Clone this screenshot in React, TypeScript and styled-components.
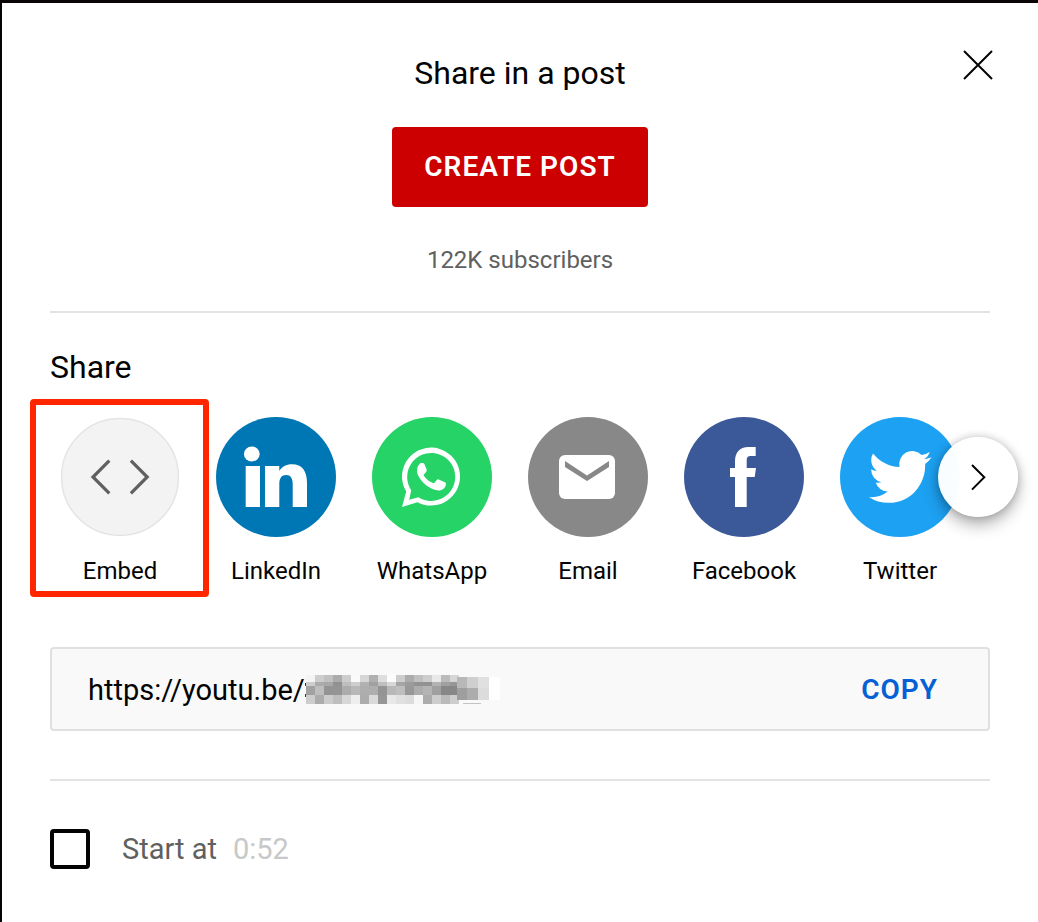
import React from "react";
import styled, { createGlobalStyle } from "styled-components";

const GlobalStyle = createGlobalStyle`
  *, *::before, *::after { box-sizing: border-box; }
  body {
    margin: 0;
    background: #ffffff;
    color: #030303;
    font-family: Roboto, "Liberation Sans", sans-serif;
  }
  button, input { font: inherit; }
`;

const Dialog = styled.main`
  position: relative;
  min-height: 100vh;
  padding: 48px;
  border-top: 3px solid #0a0504;
  border-left: 2px solid #050505;
  background: #ffffff;
`;

const CloseButton = styled.button`
  position: absolute;
  top: 38px;
  right: 36px;
  width: 48px;
  height: 48px;
  padding: 0;
  border: 0;
  background: none;
  cursor: pointer;

  svg { display: block; }
`;

const PostSection = styled.section`
  display: flex;
  flex-direction: column;
  align-items: center;
`;

const Heading = styled.h2`
  margin: 0;
  font-size: 32px;
  font-weight: 400;
  line-height: 44px;
`;

const CreateButton = styled.button`
  height: 80px;
  margin-top: 32px;
  padding: 0 32px 2px;
  border: 0;
  border-radius: 4px;
  background: #cc0000;
  color: #ffffff;
  font-size: 28px;
  font-weight: 600;
  letter-spacing: 1px;
  text-transform: uppercase;
  cursor: pointer;
`;

const Subscribers = styled.p`
  margin: 37px 0 0;
  color: #606060;
  font-size: 24px;
  line-height: 32px;
`;

const Divider = styled.hr<{ $top: number; $bottom: number }>`
  height: 2px;
  margin: ${(p) => p.$top}px 0 ${(p) => p.$bottom}px;
  border: 0;
  background: #e3e3e3;
`;

const Carousel = styled.div`
  position: relative;
  margin-top: 28px;
`;

const TargetList = styled.ul`
  display: flex;
  gap: 36px;
  margin: 0;
  padding: 0 10px;
  list-style: none;
`;

const TargetItem = styled.li<{ $highlighted?: boolean }>`
  position: relative;
  flex: none;

  &::after {
    content: ${(p) => (p.$highlighted ? '""' : "none")};
    position: absolute;
    inset: -18px -29px -10px -30px;
    border: 6px solid #ff2600;
    border-radius: 4px;
    pointer-events: none;
  }
`;

const TargetButton = styled.button`
  display: flex;
  flex-direction: column;
  align-items: center;
  gap: 18px;
  width: 120px;
  padding: 0;
  border: 0;
  background: none;
  color: #030303;
  font-size: 24px;
  line-height: 32px;
  cursor: pointer;

  svg { display: block; }
`;

const NextButton = styled.button`
  position: absolute;
  top: 20px;
  right: -28px;
  width: 80px;
  height: 80px;
  padding: 0;
  border: 0;
  border-radius: 50%;
  background: rgba(255, 255, 255, 0.98);
  box-shadow: 0 8px 16px rgba(0, 0, 0, 0.3), 0 0 8px rgba(0, 0, 0, 0.2);
  cursor: pointer;

  svg { display: block; }
`;

const LinkBar = styled.div`
  display: flex;
  align-items: center;
  height: 84px;
  margin-top: 60px;
  padding: 2px 36px 0;
  border: 2px solid #e0e0e0;
  border-radius: 4px;
  background: #f9f9f9;
`;

const LinkInput = styled.input`
  field-sizing: content;
  min-width: 0;
  padding: 0;
  border: 0;
  outline: 0;
  background: none;
  color: #030303;
  font-size: 29px;
  line-height: 40px;
`;

const Mosaic = styled.svg`
  flex: none;
  display: block;
`;

const CopyButton = styled.button`
  margin-left: auto;
  padding: 0 14px;
  border: 0;
  background: none;
  color: #065fd4;
  font-size: 28px;
  font-weight: 600;
  line-height: 40px;
  letter-spacing: 1px;
  cursor: pointer;
`;

const StartRow = styled.div`
  display: flex;
  align-items: center;
  font-size: 29px;
  line-height: 40px;
`;

const Checkbox = styled.input`
  appearance: none;
  width: 40px;
  height: 40px;
  margin: 0 32px 0 0;
  border: 4px solid #030303;
  border-radius: 4px;
  background: #ffffff;

  &:checked { background: #030303; }
`;

const StartLabel = styled.label`
  color: #606060;
`;

const StartTime = styled.span`
  margin-left: 16px;
  color: #c8c8c8;
`;

const Disc = ({ fill, children }: { fill: string; children: React.ReactNode }) => (
  <svg width="120" height="120" viewBox="0 0 120 120" aria-hidden="true">
    <circle cx="60" cy="60" r="60" fill={fill} />
    {children}
  </svg>
);

const targets = [
  {
    name: "Embed",
    icon: (
      <svg width="120" height="120" viewBox="0 0 120 120" aria-hidden="true">
        <circle cx="60" cy="60" r="58.5" fill="#f3f3f3" stroke="#e4e4e4" strokeWidth="1.4" />
        <path
          d="M49.3 43.6L33 60l16.3 16.4M70.9 43.6L87.2 60 70.9 76.4"
          fill="none"
          stroke="#606060"
          strokeWidth="3.2"
        />
      </svg>
    ),
  },
  {
    name: "LinkedIn",
    icon: (
      <Disc fill="#0077b5">
        <ellipse cx="35.8" cy="37" rx="7.9" ry="7.4" fill="#fff" />
        <path
          fill="#fff"
          d="M29.7 49H44v41H29.7zM49 49h14.3v5C66 49.5 70 47.2 76 47.2c10.5 0 15 7 15 18.8v24H76.7V67.5c0-6.300-2-9.500-6.500-9.500-4.700 0-6.900 3.200-6.900 9.500V90H49z"
        />
      </Disc>
    ),
  },
  {
    name: "WhatsApp",
    icon: (
      <Disc fill="#25d366">
        <path
          fill="#fff"
          fillRule="evenodd"
          d="M30 90l4.200-15.400A29 29 0 1 1 45.400 85.200zM37.200 82.800l9.300-2.500A24 24 0 1 0 39.200 73.200z"
        />
        <path
          fill="#fff"
          d="M48.500 46h2.200c1 0 1.500.5 1.900 1.500l2 5c.3.900.1 1.600-.5 2.400l-2 2.300c-.5.600-.5 1.100-.1 1.700 2.300 3.300 5.300 5.500 9 7 .7.300 1.200.1 1.700-.5l2-2.500c.6-.7 1.200-.8 2-.5l6.200 2.900c.8.400 1.100.8 1 1.700-.3 4-3.400 6.500-7.400 6.500-3.500 0-9.500-2.500-13.500-6.200-4.500-4.200-8-9.300-8-13.300 0-3.300 1.300-6.400 3.500-8z"
        />
      </Disc>
    ),
  },
  {
    name: "Email",
    icon: (
      <Disc fill="#888888">
        <rect x="31" y="38" width="56" height="44" rx="6" fill="#fff" />
        <path fill="#888888" d="M37 44l22 14.500L81 44v6L59 64 37 50z" />
      </Disc>
    ),
  },
  {
    name: "Facebook",
    icon: (
      <Disc fill="#3b5998">
        <path
          fill="#fff"
          d="M51 90V60h-5v-9h5v-6.500C51 35.500 55.500 30 64.500 30h7.200v9h-4.500c-3.500 0-4.500 1.300-4.500 4.500V51H72l-1.300 9h-8v30z"
        />
      </Disc>
    ),
  },
  {
    name: "Twitter",
    icon: (
      <Disc fill="#1da1f2">
        <path
          transform="translate(28.7 28) scale(2.62 2.66)"
          fill="#fff"
          d="M23.953 4.570a10 10 0 0 1-2.825.775 4.958 4.958 0 0 0 2.163-2.723c-.951.555-2.005.959-3.127 1.184a4.920 4.920 0 0 0-8.384 4.482C7.690 8.095 4.067 6.130 1.640 3.162a4.822 4.822 0 0 0-.666 2.475c0 1.710.870 3.213 2.188 4.096a4.904 4.904 0 0 1-2.228-.616v.060a4.923 4.923 0 0 0 3.946 4.827 4.996 4.996 0 0 1-2.212.085 4.936 4.936 0 0 0 4.604 3.417 9.867 9.867 0 0 1-6.102 2.105c-.390 0-.779-.023-1.170-.067a13.995 13.995 0 0 0 7.557 2.209c9.053 0 13.998-7.496 13.998-13.985 0-.210 0-.420-.015-.630A9.935 9.935 0 0 0 24 4.590z"
        />
      </Disc>
    ),
  },
];

/* Grey levels of the censored part of the link: 9px columns, four bands. */
const mosaicBands = [
  { y: 5, h: 7, levels: [244, 205, 193, 172, 205, 250, 214, 176, 222, 252, 205, 172, 192, 205, 232, 187, 214] },
  { y: 12, h: 4, levels: [205, 172, 168, 145, 190, 205, 178, 160, 190, 215, 165, 155, 146, 146, 178, 160, 150] },
  { y: 16, h: 9, levels: [162, 190, 148, 148, 172, 184, 174, 174, 148, 184, 190, 152, 172, 180, 160, 135, 135] },
  { y: 25, h: 9, levels: [205, 172, 204, 190, 215, 238, 172, 218, 150, 232, 224, 220, 246, 172, 205, 186, 205] },
];
const mosaicTail = [
  { x: 152, levels: [184, 158] },
  { x: 162, levels: [207, 172] },
  { x: 173, levels: [224, 220] },
  { x: 184, levels: [255, 255] },
];
const grey = (v: number) => `rgb(${v},${v},${v})`;

const HiddenCode = () => (
  <Mosaic width="196" height="40" viewBox="0 0 196 40" shapeRendering="crispEdges" aria-hidden="true">
    <path d="M0 13h2v3H0zM0 24h2v3H0z" fill="#333" />
    {mosaicBands.map((band) =>
      band.levels.map((v, i) => (
        <rect key={`${band.y}-${i}`} x={1 + i * 9} y={band.y} width="9" height={band.h} fill={grey(v)} />
      ))
    )}
    {mosaicTail.map((col) => (
      <g key={col.x}>
        <rect x={col.x} y="7" width="11" height="11" fill={grey(col.levels[0])} />
        <rect x={col.x} y="18" width="11" height="12" fill={grey(col.levels[1])} />
      </g>
    ))}
    <path d="M158 33h18v1h-18z" fill="#c4c4c4" />
  </Mosaic>
);

export default function App() {
  return (
    <>
      <GlobalStyle />
      <Dialog>
        <PostSection>
          <Heading>Share in a post</Heading>
          <CreateButton type="button">Create post</CreateButton>
          <Subscribers>122K subscribers</Subscribers>
        </PostSection>
        <CloseButton type="button" aria-label="Close">
          <svg width="48" height="48" viewBox="0 0 48 48" aria-hidden="true">
            <path d="M10 10l28 28M38 10L10 38" stroke="#030303" strokeWidth="2" />
          </svg>
        </CloseButton>

        <Divider $top={35} $bottom={32} />

        <section>
          <Heading>Share</Heading>
          <Carousel>
            <TargetList>
              {targets.map((t) => (
                <TargetItem key={t.name} $highlighted={t.name === "Embed"}>
                  <TargetButton type="button">
                    {t.icon}
                    <span>{t.name}</span>
                  </TargetButton>
                </TargetItem>
              ))}
            </TargetList>
            <NextButton type="button" aria-label="Next">
              <svg width="80" height="80" viewBox="0 0 80 80" aria-hidden="true">
                <path d="M34 28l12.300 12.300L34 52.600" fill="none" stroke="#030303" strokeWidth="2" />
              </svg>
            </NextButton>
          </Carousel>
          <LinkBar>
            <LinkInput readOnly aria-label="Video link" value="https://youtu.be/" />
            <HiddenCode />
            <CopyButton type="button">COPY</CopyButton>
          </LinkBar>
        </section>

        <Divider $top={48} $bottom={48} />

        <StartRow>
          <Checkbox type="checkbox" id="start-at" />
          <StartLabel htmlFor="start-at">Start at</StartLabel>
          <StartTime>0:52</StartTime>
        </StartRow>
      </Dialog>
    </>
  );
}
